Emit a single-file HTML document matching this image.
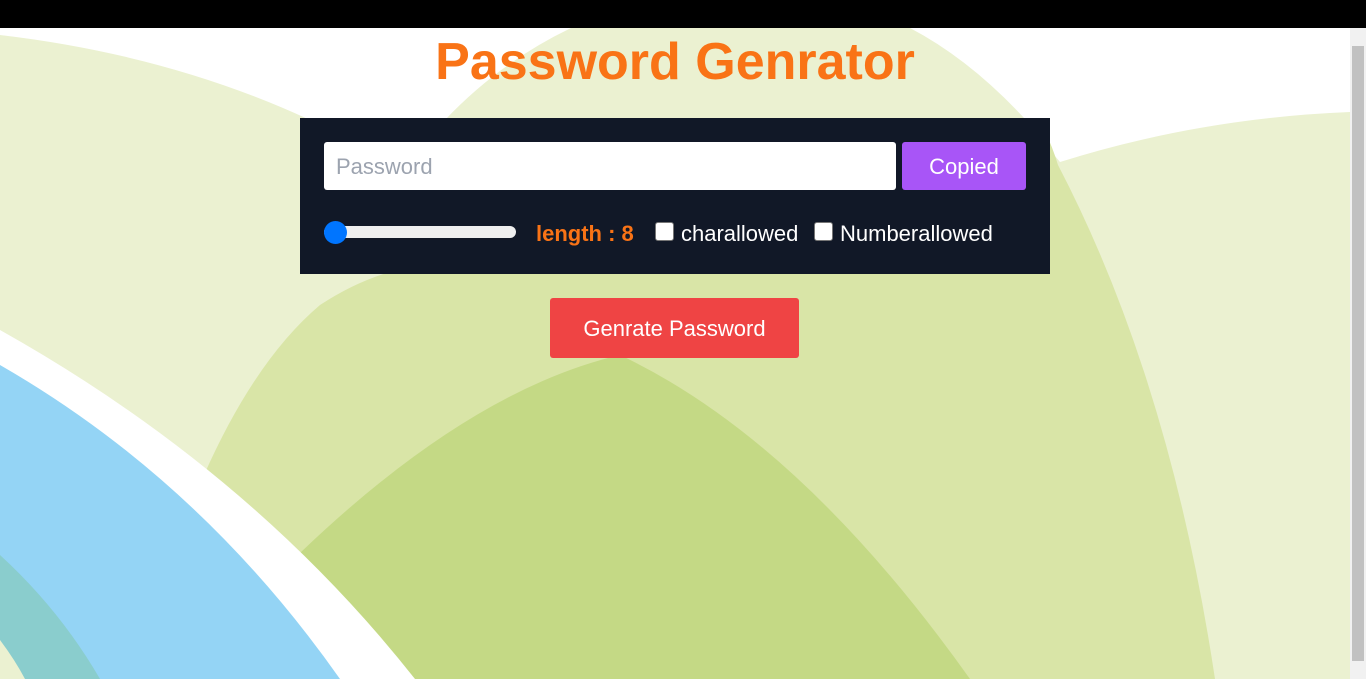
<!DOCTYPE html>
<html><head><meta charset="utf-8"><style>
html,body{margin:0;padding:0;width:1366px;height:679px;overflow:hidden;font-family:"Segoe UI","Liberation Sans",sans-serif}
.bg{position:absolute;left:0;top:0}
.top{position:absolute;left:0;top:0;width:1366px;height:28px;background:#000}
.sb{position:absolute;right:0;top:28px;width:16px;height:651px;background:#f1f1f1}
.sb .th{position:absolute;left:2px;top:18px;width:12px;height:615px;background:#c1c1c1}
h1{position:absolute;left:0;width:1350px;top:30px;margin:0;text-align:center;color:#f97316;font-size:52px;font-weight:bold;line-height:64px}
.card{position:absolute;left:300px;top:118px;width:750px;height:156px;background:#111827}
.inp{position:absolute;left:24px;top:24px;width:572px;height:48px;background:#fff;border-radius:3px;color:#9ca3af;font-size:22px;line-height:50px;padding-left:12px;box-sizing:border-box}
.cp{position:absolute;left:602px;top:24px;width:124px;height:48px;background:#a855f7;border-radius:3px;color:#fff;font-size:22px;line-height:50px;text-align:center}
.track{position:absolute;left:24px;top:108px;width:192px;height:12px;background:#efefef;border-radius:6px}
.knob{position:absolute;left:24px;top:103px;width:23px;height:23px;background:#0075ff;border-radius:50%}
.len{position:absolute;left:236px;top:100px;color:#f97316;font-size:22px;font-weight:bold;line-height:32px}
.cb{position:absolute;top:104px;width:19px;height:19px;background:#fff;border:1px solid #767676;border-radius:3px;box-sizing:border-box}
.lab{position:absolute;top:100px;color:#fff;font-size:22px;line-height:32px}
.gen{position:absolute;left:550px;top:298px;width:249px;height:60px;background:#ef4444;border-radius:3px;color:#fff;font-size:22px;line-height:62px;text-align:center}
</style></head><body>
<svg class="bg" width="1366" height="679" viewBox="0 0 1366 679">
<rect width="1366" height="679" fill="#fff"/>
<path d="M0 35 Q170 55 310 120 L445 120 Q500 62 571 28 L910 28 Q975 62 1035 130 Q1048 148 1060 162 Q1200 118 1350 112 L1350 679 L0 679 Z" fill="#ebf1d1"/>
<path d="M204 475 Q255 360 320 305 Q355 282 390 272 L500 120 L1040 120 Q1052 145 1058 165 Q1170 380 1215 679 L310 679 Z" fill="#d9e5a7"/>
<path d="M300 553 Q470 390 620 355 Q800 440 970 679 L330 679 Z" fill="#c4d985"/>
<path d="M0 330 Q250 470 415 679 L0 679 Z" fill="#fff"/>
<path d="M0 365 Q200 480 340 679 L0 679 Z" fill="#94d4f5"/>
<path d="M0 555 Q60 610 100 679 L0 679 Z" fill="#8acdcd"/>
<path d="M0 640 Q15 660 25 679 L0 679 Z" fill="#ebf1d1"/>
</svg>
<div class="top"></div>
<div class="sb"><div class="th"></div></div>
<h1>Password Genrator</h1>
<div class="card">
<div class="inp">Password</div>
<div class="cp">Copied</div>
<div class="track"></div><div class="knob"></div>
<div class="len">length : 8</div>
<div class="cb" style="left:355px"></div><div class="lab" style="left:381px">charallowed</div>
<div class="cb" style="left:514px"></div><div class="lab" style="left:540px">Numberallowed</div>
</div>
<div class="gen">Genrate Password</div>
</body></html>
